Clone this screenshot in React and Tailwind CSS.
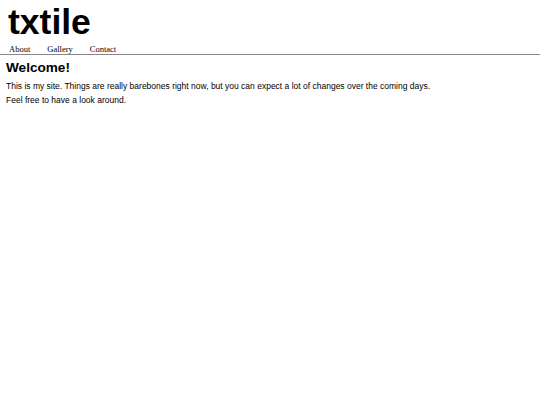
import React from 'react';

const App = () => {
  return (
    <div className="min-h-screen bg-white text-black">
      <header>
        <h1 className="px-[8px] pt-[2px] text-[35.5px] font-bold leading-[40px] font-['Liberation_Sans',Arial,sans-serif]">
          txtile
        </h1>
        <nav className="flex gap-[17px] px-[9px] pt-[2px] border-b border-[#888] text-[8.5px] leading-[10px] font-['Liberation_Serif','Times_New_Roman',serif]">
          <a href="#">About</a>
          <a href="#">Gallery</a>
          <a href="#">Contact</a>
        </nav>
      </header>
      <main className="px-[6px] pt-[5px] font-['Liberation_Sans',Arial,sans-serif]">
        <h2 className="text-[13.6px] font-bold leading-[16px]">Welcome!</h2>
        <p className="mt-[3px] text-[8.5px] leading-[14px]">
          This is my site. Things are really barebones right now, but you can expect a lot of changes over the coming days.
        </p>
        <p className="text-[8.5px] leading-[14px]">Feel free to have a look around.</p>
      </main>
    </div>
  );
};

export default App;
